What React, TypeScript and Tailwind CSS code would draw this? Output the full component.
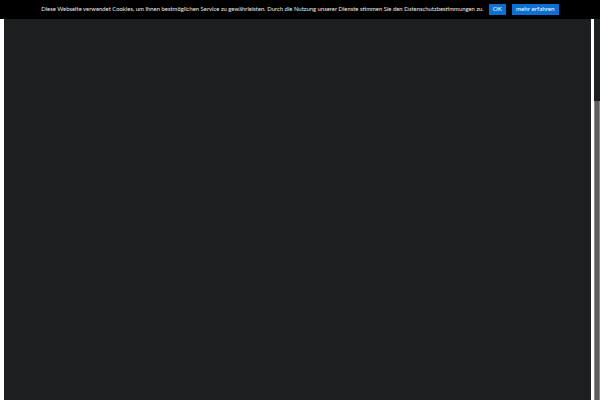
export default function App() {
  return (
    <div className="w-[600px] h-[400px] flex flex-col bg-black overflow-hidden" style={{ fontFamily: 'Lato, "Open Sans", sans-serif' }}>
      {/* Cookie bar */}
      <div className="h-[19px] flex items-center justify-center gap-[5px] bg-black text-[5.9px] text-[#ececec]">
        <span>
          Diese Webseite verwendet Cookies, um Ihnen bestmöglichen Service zu gewährleisten. Durch die Nutzung unserer Dienste stimmen Sie den Datenschutzbestimmungen zu.
        </span>
        <button className="h-[11px] w-[17px] bg-[#0c6fd1] text-white text-[6.2px] leading-none">OK</button>
        <button className="h-[11px] w-[47px] ml-[1px] bg-[#0c6fd1] text-white text-[6.2px] leading-none">mehr erfahren</button>
      </div>
      {/* Page */}
      <div className="flex-1 flex">
        <div className="w-[4px] bg-white" />
        <div className="flex-1 bg-[#1b1f20]" />
        <div className="w-[3px] bg-white" />
        <div className="w-[6px] flex flex-col">
          <div className="h-[82px] bg-[#1b1f20]" />
          <div className="flex-1 bg-[#5e5e5e] border-x border-[#8a8a8a]" />
        </div>
      </div>
    </div>
  );
}
